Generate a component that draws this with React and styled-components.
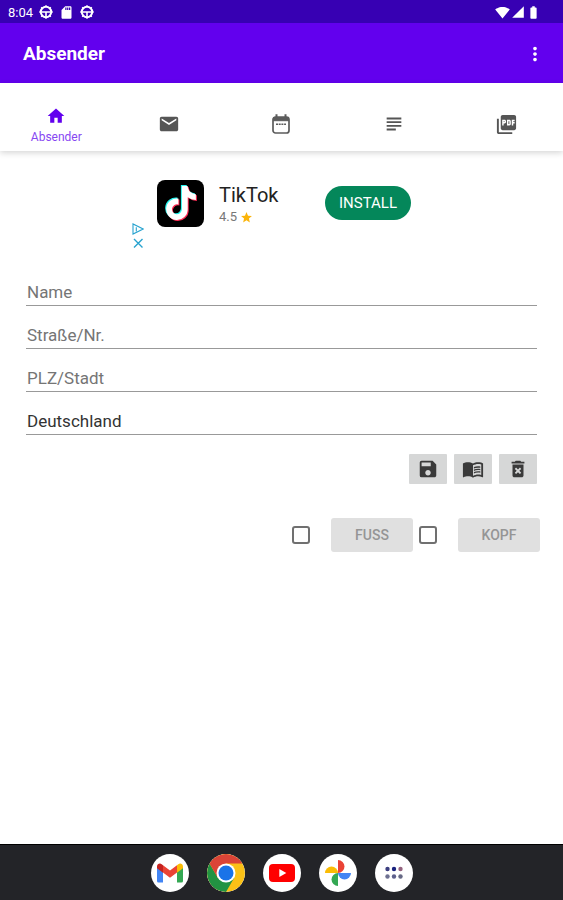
import { useState } from "react";

import styled, { createGlobalStyle } from "styled-components";
import { FaTiktok } from "react-icons/fa";
import {
  MdBatteryFull,
  MdDeleteForever,
  MdEmail,
  MdHome,
  MdMenuBook,
  MdMoreVert,
  MdPictureAsPdf,
  MdSave,
  MdSdCard,
  MdSignalCellular4Bar,
  MdSignalWifi4Bar,
  MdStar,
  MdSubject,
} from "react-icons/md";

const GlobalStyle = createGlobalStyle`
  * {
    box-sizing: border-box;
  }

  body {
    margin: 0;
    background: #fff;
    font-family: Roboto, "Liberation Sans", sans-serif;
  }

  button,
  input {
    font-family: inherit;
  }

  svg {
    display: block;
    flex: none;
  }
`;

// Styled components
const Screen = styled.div`
  display: flex;
  flex-direction: column;
  min-height: 100vh;
`;

const StatusBar = styled.div`
  display: flex;
  align-items: center;
  justify-content: space-between;
  height: 23px;
  padding: 1px 22px 0 8px;
  background-color: #3700b3;
  color: #fff;
  font-size: 13px;
`;

const StatusGroup = styled.div`
  display: flex;
  align-items: center;
  gap: ${({ $gap }) => $gap}px;
`;

const AppBar = styled.header`
  display: flex;
  align-items: center;
  justify-content: space-between;
  height: 60px;
  padding: 1px 17px 0 23px;
  background-color: #6200ee;
  color: #fff;
`;

const Title = styled.h1`
  margin: 0;
  font-size: 19px;
  font-weight: 700;
`;

const MenuButton = styled.button`
  padding: 0;
  border: none;
  background: none;
  color: #fff;
  cursor: pointer;
`;

const Tabs = styled.nav`
  display: grid;
  grid-template-columns: repeat(5, 1fr);
  height: 68px;
  box-shadow: 0 2px 6px rgba(0, 0, 0, 0.16);
`;

const Tab = styled.button`
  display: flex;
  flex-direction: column;
  align-items: center;
  justify-content: center;
  gap: 4px;
  padding: ${({ $active }) => ($active ? "16px" : "14px")} 0 0;
  border: none;
  background: none;
  color: ${({ $active }) => ($active ? "#6200ee" : "#555")};
  font-size: 12px;
  line-height: 14px;
  cursor: pointer;
`;

const TabLabel = styled.span`
  color: #8747f2;
`;

const Main = styled.main`
  flex: 1;
`;

const Ad = styled.section`
  display: flex;
  align-items: flex-start;
  justify-content: center;
  height: 124px;
  padding: 29px 20px 0 0;
`;

const AdMarks = styled.div`
  display: flex;
  flex-direction: column;
  gap: 2px;
  margin: 43px 13px 0 0;
`;

const AdMark = styled.button`
  padding: 0;
  border: none;
  background: none;
  cursor: pointer;
`;

const AdText = styled.div`
  width: 106px;
  margin-left: 15px;
  padding-top: 3px;
`;

const AdName = styled.div`
  color: #222;
  font-size: 20px;
  line-height: 24px;
`;

const AdRating = styled.div`
  display: flex;
  align-items: center;
  gap: 3px;
  color: #777;
  font-size: 13px;
  line-height: 20px;

  svg {
    color: #fbb40a;
  }
`;

const InstallButton = styled.button`
  width: 86px;
  height: 34px;
  margin-top: 6px;
  padding: 0;
  border: none;
  border-radius: 17px;
  background-color: #04875a;
  color: #fff;
  font-size: 15px;
  cursor: pointer;
`;

const Fields = styled.div`
  display: flex;
  flex-direction: column;
  gap: 12px;
  padding: 0 26px;
`;

const Field = styled.input`
  width: 100%;
  height: 31px;
  padding: 4px 1px 0;
  border: none;
  border-bottom: 1px solid #999;
  background: none;
  color: #333;
  font-size: 17px;
  outline: none;

  &::placeholder {
    color: #757575;
    opacity: 1;
  }
`;

const Tools = styled.div`
  display: flex;
  justify-content: flex-end;
  gap: 7px;
  padding: 19px 26px 0;
`;

const ToolButton = styled.button`
  display: flex;
  align-items: center;
  justify-content: center;
  width: 38px;
  height: 30px;
  padding: 0;
  border: none;
  border-radius: 1px;
  background-color: #d6d7d7;
  color: #3a3a3a;
  cursor: pointer;
`;

const Options = styled.div`
  display: flex;
  align-items: center;
  justify-content: flex-end;
  gap: 6px;
  padding: 34px 23px 0;
`;

const Option = styled.div`
  display: flex;
  align-items: center;
  gap: 21px;
`;

const Check = styled.input`
  appearance: none;
  width: 18px;
  height: 18px;
  margin: 0;
  border: 2px solid #707070;
  border-radius: 3px;
  background-color: ${({ checked }) => (checked ? "#6200ee" : "#fff")};
`;

const OptionButton = styled.button`
  width: 82px;
  height: 34px;
  padding: 0;
  border: none;
  border-radius: 3px;
  background-color: #e0e0e0;
  color: #959595;
  font-size: 14px;
  font-weight: 500;
`;

const Dock = styled.footer`
  display: flex;
  align-items: center;
  justify-content: center;
  gap: 18px;
  height: 56px;
  border-top: 1px solid #000;
  background-color: #232428;
`;

const DockApp = styled.button`
  display: flex;
  align-items: center;
  justify-content: center;
  width: 38px;
  height: 38px;
  padding: 0;
  border: none;
  border-radius: 50%;
  background-color: #fff;
  overflow: hidden;
  cursor: pointer;
`;

// Icons
const WheelIcon = () => (
  <svg width="14" height="14" viewBox="0 0 14 14" fill="none" stroke="#fff">
    <circle cx="7" cy="7" r="5.2" strokeWidth="2" />
    <path d="M2.5 7h9M7 7.5V12" strokeWidth="1.6" />
    <path
      d="M7 .3v1.4M7 12.3v1.4M.3 7h1.4M12.3 7h1.4M2.2 2.2l1 1M10.8 10.8l1 1M11.8 2.2l-1 1M3.2 10.8l-1 1"
      strokeWidth="1.4"
    />
  </svg>
);

const CalendarIcon = () => (
  <svg width="18" height="20" viewBox="0 0 18 20" fill="none" stroke="#5c5c5c">
    <rect x="1" y="3" width="16" height="16" rx="2.5" strokeWidth="1.7" />
    <path d="M1.5 3.5h15v3.2h-15z" fill="#5c5c5c" strokeWidth="1" />
    <path d="M4.5.3v3M13.5.3v3" strokeWidth="2" />
    <path d="M4 10.2h10" strokeWidth="1.5" strokeDasharray="2 .7" />
  </svg>
);

const TikTokLogo = () => (
  <svg width="47" height="47" viewBox="0 0 47 47">
    <rect width="47" height="47" rx="8" fill="#000" />
    <FaTiktok x="6" y="5" size={34} color="#25f4ee" />
    <FaTiktok x="8" y="7" size={34} color="#fe2c55" />
    <FaTiktok x="7" y="6" size={34} color="#fff" />
  </svg>
);

const AdChoicesIcon = () => (
  <svg width="12" height="12" viewBox="0 0 12 12" fill="none" stroke="#28a3cf">
    <path d="M1 1v10l10.200-5z" strokeWidth="1.1" />
    <path d="M4.300 4.200v4.300" strokeWidth="1.1" />
  </svg>
);

const CloseIcon = () => (
  <svg width="12" height="12" viewBox="0 0 12 12" stroke="#28a3cf">
    <path d="m2 2 8.500 8.500M10.500 2 2 10.500" strokeWidth="1.4" />
  </svg>
);

const GmailLogo = () => (
  <svg width="26" height="20" viewBox="0 0 26 20">
    <path d="M0 4v14a1.600 1.600 0 0 0 1.600 1.600H6V8z" fill="#4285f4" />
    <path d="M26 4v14a1.600 1.600 0 0 1-1.600 1.600H20V8z" fill="#34a853" />
    <path d="M6 2.200v7.400l7 5.200 7-5.200V2.200l-7 5.200z" fill="#ea4335" />
    <path d="M0 3.400v1.800l6 4.500V2.200L4.700 1.200C2.800-.2 0 1 0 3.400z" fill="#c5221f" />
    <path d="M26 3.400v1.800l-6 4.500V2.200l1.300-1C23.200-.2 26 1 26 3.400z" fill="#fbbc04" />
  </svg>
);

const ChromeLogo = () => (
  <svg width="38" height="38" viewBox="0 0 38 38">
    <circle cx="19" cy="19" r="19" fill="#fbc116" />
    <path
      d="M2.550 9.500A19 19 0 0 0 19 38l8.200-14.250L19 19l-8.200 4.750z"
      fill="#229342"
    />
    <path d="M2.550 9.500A19 19 0 0 1 35.450 9.500H19v9.500l-8.230 4.750z" fill="#db4437" />
    <circle cx="19" cy="19" r="9.500" fill="#fff" />
    <circle cx="19" cy="19" r="7.500" fill="#1a73e8" />
  </svg>
);

const YouTubeLogo = () => (
  <svg width="26" height="18" viewBox="0 0 26 18">
    <rect width="26" height="18" rx="4" fill="#f00" />
    <path d="M10.300 5v8l7-4z" fill="#fff" />
  </svg>
);

const PhotosLogo = () => (
  <svg width="28" height="28" viewBox="0 0 28 28">
    <path d="M14 1a6.500 6.500 0 0 1 0 13z" fill="#ea4335" />
    <path d="M27 14a6.500 6.500 0 0 1-13 0z" fill="#4285f4" />
    <path d="M14 27a6.500 6.500 0 0 1 0-13z" fill="#34a853" />
    <path d="M1 14a6.500 6.500 0 0 1 13 0z" fill="#fbbc04" />
  </svg>
);

const AppsIcon = () => (
  <svg width="18" height="14" viewBox="0 0 18 14">
    <circle cx="2.500" cy="3" r="2.200" fill="#3c3f80" />
    <circle cx="9" cy="3" r="2.200" fill="#1a237e" />
    <circle cx="15.500" cy="3" r="2.200" fill="#94637f" />
    <circle cx="2.500" cy="10.500" r="2.200" fill="#6d7091" />
    <circle cx="9" cy="10.500" r="2.200" fill="#5d608c" />
    <circle cx="15.500" cy="10.500" r="2.200" fill="#666985" />
  </svg>
);

const tabs = [
  { name: "Absender", icon: <MdHome size={20} /> },
  { name: "Empfänger", icon: <MdEmail size={22} /> },
  { name: "Datum", icon: <CalendarIcon /> },
  { name: "Text", icon: <MdSubject size={22} /> },
  { name: "PDF", icon: <MdPictureAsPdf size={23} /> },
];

const fields = [
  { key: "name", label: "Name" },
  { key: "street", label: "Straße/Nr." },
  { key: "city", label: "PLZ/Stadt" },
  { key: "country", label: "Land" },
];

const dockApps = [
  { name: "Gmail", icon: <GmailLogo /> },
  { name: "Chrome", icon: <ChromeLogo /> },
  { name: "YouTube", icon: <YouTubeLogo /> },
  { name: "Fotos", icon: <PhotosLogo /> },
  { name: "Apps", icon: <AppsIcon /> },
];

const emptySender = { name: "", street: "", city: "", country: "" };

export default function App() {
  const [activeTab, setActiveTab] = useState("Absender");
  const [sender, setSender] = useState({
    ...emptySender,
    country: "Deutschland",
  });
  const [options, setOptions] = useState({ FUSS: false, KOPF: false });

  return (
    <Screen>
      <GlobalStyle />
      <StatusBar>
        <StatusGroup $gap={6}>
          <span>8:04</span>
          <WheelIcon />
          <MdSdCard size={15} />
          <WheelIcon />
        </StatusGroup>
        <StatusGroup $gap={1}>
          <MdSignalWifi4Bar size={15} />
          <MdSignalCellular4Bar size={14} />
          <MdBatteryFull size={15} />
        </StatusGroup>
      </StatusBar>
      <AppBar>
        <Title>Absender</Title>
        <MenuButton type="button" aria-label="Menü">
          <MdMoreVert size={22} />
        </MenuButton>
      </AppBar>
      <Tabs>
        {tabs.map((tab) => (
          <Tab
            key={tab.name}
            type="button"
            aria-label={tab.name}
            $active={tab.name === activeTab}
            onClick={() => setActiveTab(tab.name)}
          >
            {tab.icon}
            {tab.name === activeTab && <TabLabel>{tab.name}</TabLabel>}
          </Tab>
        ))}
      </Tabs>
      <Main>
        <Ad>
          <AdMarks>
            <AdMark type="button" aria-label="AdChoices">
              <AdChoicesIcon />
            </AdMark>
            <AdMark type="button" aria-label="Anzeige schließen">
              <CloseIcon />
            </AdMark>
          </AdMarks>
          <TikTokLogo />
          <AdText>
            <AdName>TikTok</AdName>
            <AdRating>
              4.5
              <MdStar size={13} />
            </AdRating>
          </AdText>
          <InstallButton type="button">INSTALL</InstallButton>
        </Ad>
        <Fields>
          {fields.map(({ key, label }) => (
            <Field
              key={key}
              type="text"
              aria-label={label}
              placeholder={label}
              value={sender[key]}
              onChange={(e) => setSender({ ...sender, [key]: e.target.value })}
            />
          ))}
        </Fields>
        <Tools>
          <ToolButton type="button" aria-label="Speichern">
            <MdSave size={22} />
          </ToolButton>
          <ToolButton type="button" aria-label="Adressbuch">
            <MdMenuBook size={22} />
          </ToolButton>
          <ToolButton
            type="button"
            aria-label="Löschen"
            onClick={() => setSender(emptySender)}
          >
            <MdDeleteForever size={22} />
          </ToolButton>
        </Tools>
        <Options>
          {Object.keys(options).map((name) => (
            <Option key={name}>
              <Check
                type="checkbox"
                aria-label={name}
                checked={options[name]}
                onChange={() =>
                  setOptions({ ...options, [name]: !options[name] })
                }
              />
              <OptionButton type="button" disabled={!options[name]}>
                {name}
              </OptionButton>
            </Option>
          ))}
        </Options>
      </Main>
      <Dock>
        {dockApps.map((app) => (
          <DockApp key={app.name} type="button" aria-label={app.name}>
            {app.icon}
          </DockApp>
        ))}
      </Dock>
    </Screen>
  );
}
